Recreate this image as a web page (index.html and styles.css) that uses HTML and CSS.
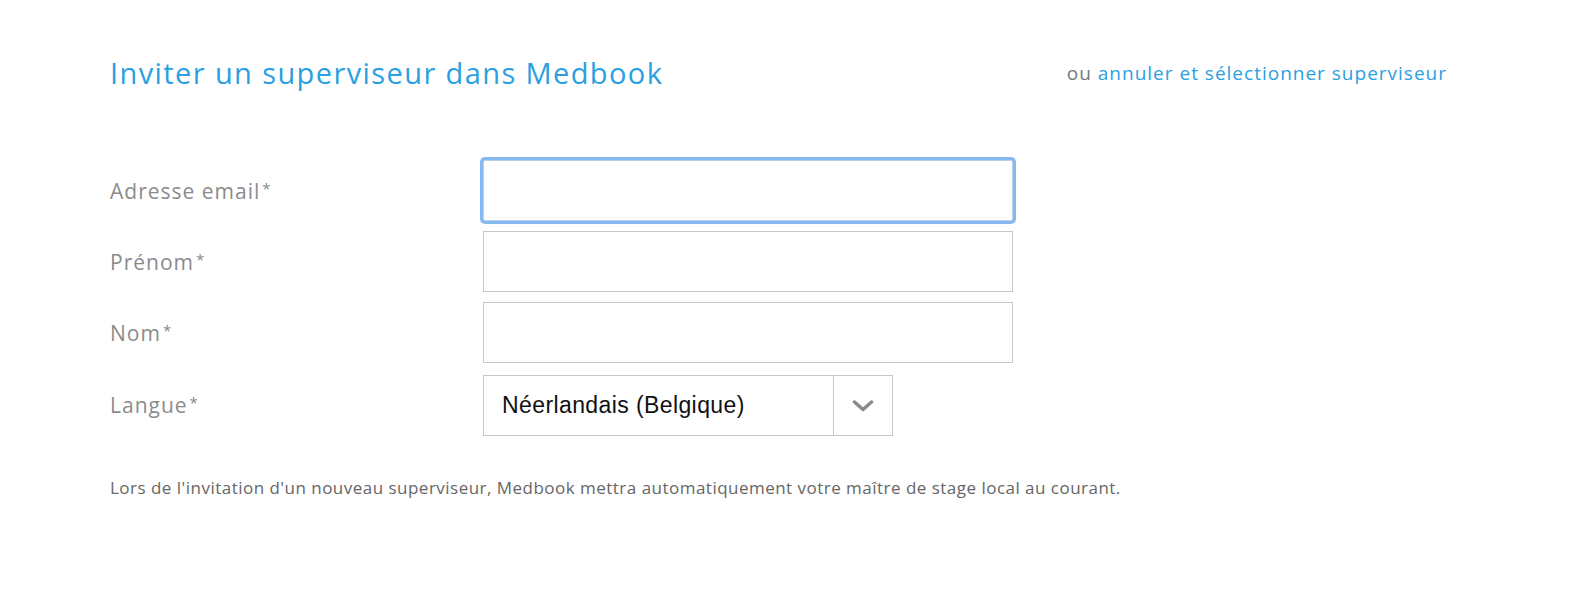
FILE: index.html
```html
<!DOCTYPE html>
<html lang="fr">
<head>
<meta charset="utf-8">
<title>Inviter un superviseur</title>
<link rel="stylesheet" href="styles.css">
</head>
<body>
<div class="page">
  <header class="head">
    <h1 class="title">Inviter un superviseur dans Medbook</h1>
    <div class="alt">ou <a href="#" class="link">annuler et sélectionner superviseur</a></div>
  </header>
  <form class="form">
    <label class="label">Adresse email<span class="req">*</span></label>
    <div class="field"><div class="input focused"></div></div>
    <label class="label">Prénom<span class="req">*</span></label>
    <div class="field"><div class="input"></div></div>
    <label class="label">Nom<span class="req">*</span></label>
    <div class="field"><div class="input"></div></div>
    <label class="label">Langue<span class="req">*</span></label>
    <div class="field field-select">
      <div class="select">
        <span class="select-value">Néerlandais (Belgique)</span>
        <span class="select-arrow">
          <svg width="22" height="12" viewBox="0 0 22 12"><path d="M2.5 2 L11 9.5 L19.5 2" fill="none" stroke="#8a8a8a" stroke-width="3.5" stroke-linecap="round" stroke-linejoin="round"/></svg>
        </span>
      </div>
    </div>
  </form>
  <p class="note">Lors de l'invitation d'un nouveau superviseur, Medbook mettra automatiquement votre maître de stage local au courant.</p>
</div>
</body>
</html>
```
FILE: styles.css
```css
* { box-sizing: border-box; }
html, body { margin: 0; padding: 0; background: #fff; }
body { font-family: "Open Sans", "Noto Sans", sans-serif; }
.page { padding: 50px 137px 0 110px; }
.head { display: flex; justify-content: space-between; align-items: center; height: 44px; }
.title { margin: 0; font-weight: 400; font-size: 29px; color: #2a9fe2; letter-spacing: 1.4px; }
.alt { font-size: 19px; color: #777; letter-spacing: 1px; padding-top: 2px; }
.link { color: #2a9fe2; text-decoration: none; }
.form { display: grid; grid-template-columns: 373px 530px; row-gap: 10px; margin-top: 66px; align-items: center; }
.label { font-size: 21px; color: #8b8b8b; letter-spacing: 1px; }
.req { font-size: 15px; position: relative; top: -5px; margin-left: 2px; color: #888; letter-spacing: 0; }
.input { height: 61px; border: 1px solid #c8c8c8; background: #fff; }
.input.focused { border-color: #b9cfe8; box-shadow: 0 0 0 3px #86b8f2; border-radius: 2px; }
.field-select { padding-top: 2px; }
.select { display: flex; width: 410px; height: 61px; border: 1px solid #c8c8c8; align-items: stretch; }
.select-value { flex: 1; display: flex; align-items: center; padding-left: 18px; font-family: "Liberation Sans", Arial, sans-serif; font-size: 23px; letter-spacing: 0.4px; color: #111; }
.select-arrow { width: 59px; border-left: 1px solid #c8c8c8; display: flex; align-items: center; justify-content: center; }
.note { margin: 40px 0 0; font-size: 17px; color: #666; letter-spacing: 0.48px; }
```
